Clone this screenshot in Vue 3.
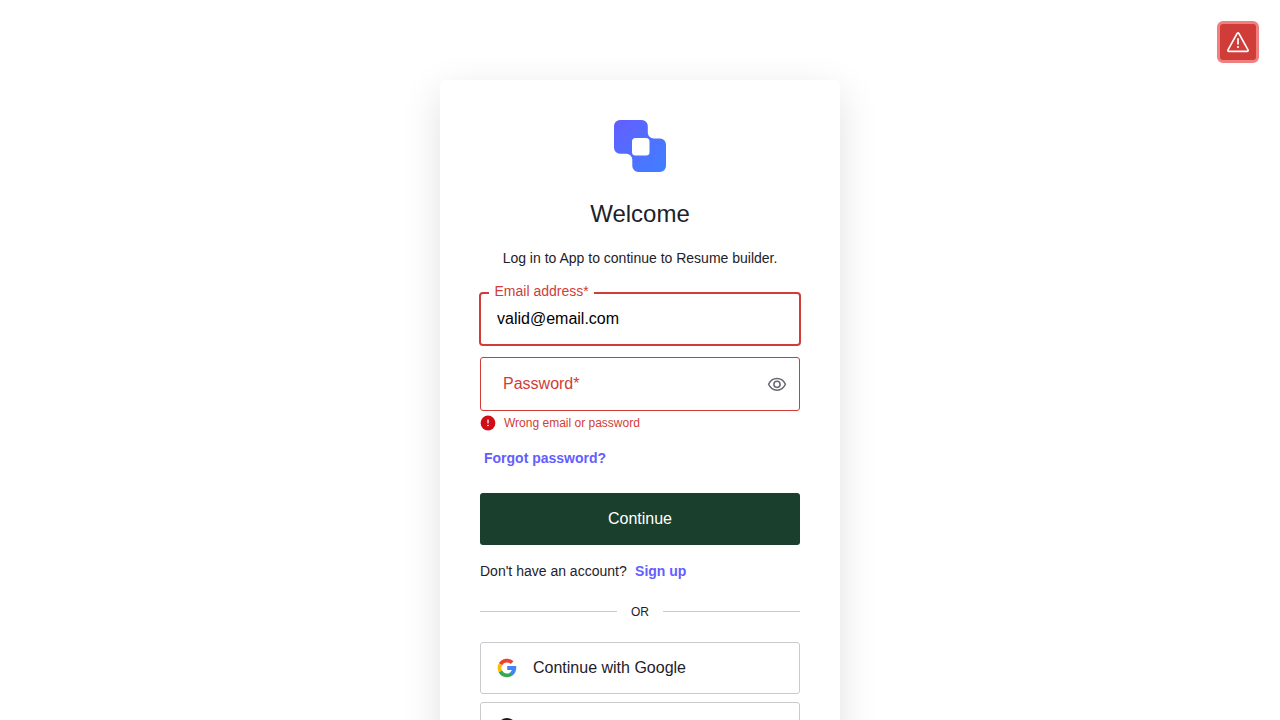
<script setup>
import { ref } from 'vue'

const email = ref('valid@email.com')
</script>

<template>
  <div class="page">
    <button class="alert" aria-label="Show errors">
      <svg width="24" height="24" viewBox="0 0 24 24" fill="none" stroke="#fff" stroke-width="1.6" stroke-linejoin="round" stroke-linecap="round">
        <path d="M11.1 3.5Q12 2.2 12.9 3.5L22 19.8Q22.5 21.3 21.2 21.4H2.8Q1.5 21.3 2 19.8Z" />
        <path d="M12 8.3V14.4" stroke-width="1.8" stroke-linecap="butt" />
        <circle cx="12" cy="17.1" r="1.05" fill="#fff" stroke="none" />
      </svg>
    </button>

    <main class="card">
      <svg class="logo" width="52" height="52" viewBox="0 0 52 52">
        <defs>
          <linearGradient id="brand" x1="0" y1="0" x2="1" y2="1">
            <stop offset="0" stop-color="#635dff" />
            <stop offset="1" stop-color="#3f80ff" />
          </linearGradient>
        </defs>
        <path
          fill="url(#brand)"
          fill-rule="evenodd"
          d="M6 0H27.8A6 6 0 0 1 33.8 6V12.5A6 6 0 0 0 39.8 18.5H46A6 6 0 0 1 52 24.5V46A6 6 0 0 1 46 52H24.3A6 6 0 0 1 18.3 46V39.7A6 6 0 0 0 12.3 33.7H6A6 6 0 0 1 0 27.7V6A6 6 0 0 1 6 0ZM21.5 18A3.5 3.5 0 0 0 18 21.5V32A3.5 3.5 0 0 0 21.5 35.5H32A3.5 3.5 0 0 0 35.5 32V21.5A3.5 3.5 0 0 0 32 18Z"
        />
      </svg>

      <h1>Welcome</h1>
      <p class="intro">Log in to App to continue to Resume builder.</p>

      <div class="field focused">
        <input v-model="email" type="text" aria-label="Email address" />
        <label>Email address*</label>
      </div>

      <div class="field password">
        <span class="placeholder">Password*</span>
        <svg width="20" height="16" viewBox="0 0 20 16" fill="none" stroke="#65676e" stroke-width="1.5">
          <path d="M1.6 8.3C3.2 4.7 6.2 2.4 10 2.4S16.8 4.7 18.4 8.3C16.8 11.9 13.8 14.2 10 14.2S3.2 11.9 1.6 8.3Z" />
          <circle cx="10" cy="8.3" r="3.1" />
        </svg>
      </div>

      <div class="error">
        <svg width="16" height="16" viewBox="0 0 16 16">
          <circle cx="8" cy="8" r="7.4" fill="#d00e17" />
          <path d="M7.2 4.8H8.8L8.5 8.6H7.5Z" fill="#fff" />
          <circle cx="8" cy="10.5" r=".8" fill="#fff" />
        </svg>
        <span>Wrong email or password</span>
      </div>

      <a class="link forgot">Forgot password?</a>
      <button class="submit">Continue</button>
      <p class="signup">Don't have an account? <a class="link">Sign up</a></p>
      <div class="divider"><span>OR</span></div>

      <button class="social">
        <svg width="20" height="20" viewBox="0 0 20 20" fill="none" stroke-width="3.8">
          <path stroke="#EA4335" d="M3.55 6.3A7.4 7.4 0 0 1 15.2 4.7" />
          <path stroke="#FBBC05" d="M3.4 13.3A7.4 7.4 0 0 1 3.55 6.3" />
          <path stroke="#34A853" d="M14.8 15.65A7.4 7.4 0 0 1 3.4 13.3" />
          <path stroke="#4285F4" d="M10.2 10H17.3A7.4 7.4 0 0 1 14.3 15.95" />
        </svg>
        <span>Continue with Google</span>
      </button>

      <button class="social" aria-label="Continue with GitHub">
        <svg width="20" height="20" viewBox="0 0 20 20">
          <circle cx="10" cy="10" r="9.9" fill="#191717" />
        </svg>
      </button>
    </main>
  </div>
</template>

<style>
html, body { overflow: hidden; }
</style>

<style scoped>
.page {
  position: relative;
  box-sizing: border-box;
  height: 720px;
  padding-top: 80px;
  overflow: hidden;
  background: #fff;
  color: #1e212a;
  font-family: "Liberation Sans", Arial, sans-serif;
}
.page * { box-sizing: border-box; }
button { margin: 0; font: inherit; }
.alert {
  position: absolute;
  top: 21px;
  right: 21px;
  display: flex;
  align-items: center;
  justify-content: center;
  width: 42px;
  height: 42px;
  padding: 0;
  border: 3px solid #f08080;
  border-radius: 6px;
  background: #d03c38;
}
.card {
  display: flex;
  flex-direction: column;
  width: 400px;
  min-height: 760px;
  margin: 0 auto;
  padding: 40px;
  border-radius: 5px;
  background: #fff;
  box-shadow: 0 12px 40px rgba(0, 0, 0, .12);
}
.logo { align-self: center; flex: none; }
h1 {
  margin: 28px 0 0;
  font-size: 24px;
  font-weight: 400;
  line-height: 28px;
  text-align: center;
}
.intro {
  margin: 20px 0 24px;
  font-size: 14px;
  line-height: 21px;
  text-align: center;
}
.field {
  position: relative;
  flex: none;
  display: flex;
  align-items: center;
  height: 54px;
  border: 1px solid #d03c38;
  border-radius: 3px;
  font-size: 16px;
}
.focused { margin: -1px -1px 0; border-width: 2px; border-radius: 4px; }
.field input {
  width: 100%;
  height: 100%;
  padding: 0 16px;
  border: 0;
  outline: 0;
  background: transparent;
  color: #000;
  font: inherit;
}
.field label {
  position: absolute;
  top: -11px;
  left: 8px;
  padding: 0 5.5px;
  background: #fff;
  color: #d03c38;
  font-size: 14px;
  line-height: 16px;
}
.password { justify-content: space-between; margin-top: 11px; padding: 0 12px 0 22px; color: #d03c38; }
.error {
  display: flex;
  align-items: center;
  gap: 8px;
  height: 16px;
  margin-top: 4px;
  color: #d03c38;
  font-size: 12px;
}
.link { color: #635dff; font-size: 14px; font-weight: 700; }
.forgot { margin: 17px 0 0 4px; line-height: 20px; }
.submit {
  height: 52px;
  margin-top: 25px;
  border: 0;
  border-radius: 3px;
  background: #1a402d;
  color: #fff;
  font-size: 16px;
}
.signup { margin: 16px 0 0; font-size: 14px; line-height: 21px; }
.signup .link { margin-left: 4.5px; }
.divider {
  display: flex;
  align-items: center;
  gap: 14px;
  height: 18px;
  margin: 20px 0 22px;
  font-size: 12px;
}
.divider span { padding-top: 2px; }
.divider::before, .divider::after { content: ""; flex: 1; height: 1px; background: #c9cace; }
.social {
  display: flex;
  flex: none;
  align-items: center;
  gap: 16px;
  height: 52px;
  margin-bottom: 8px;
  padding: 0 16px;
  border: 1px solid #c9cace;
  border-radius: 3px;
  background: #fff;
  color: #1e212a;
  font-size: 16px;
}
</style>
